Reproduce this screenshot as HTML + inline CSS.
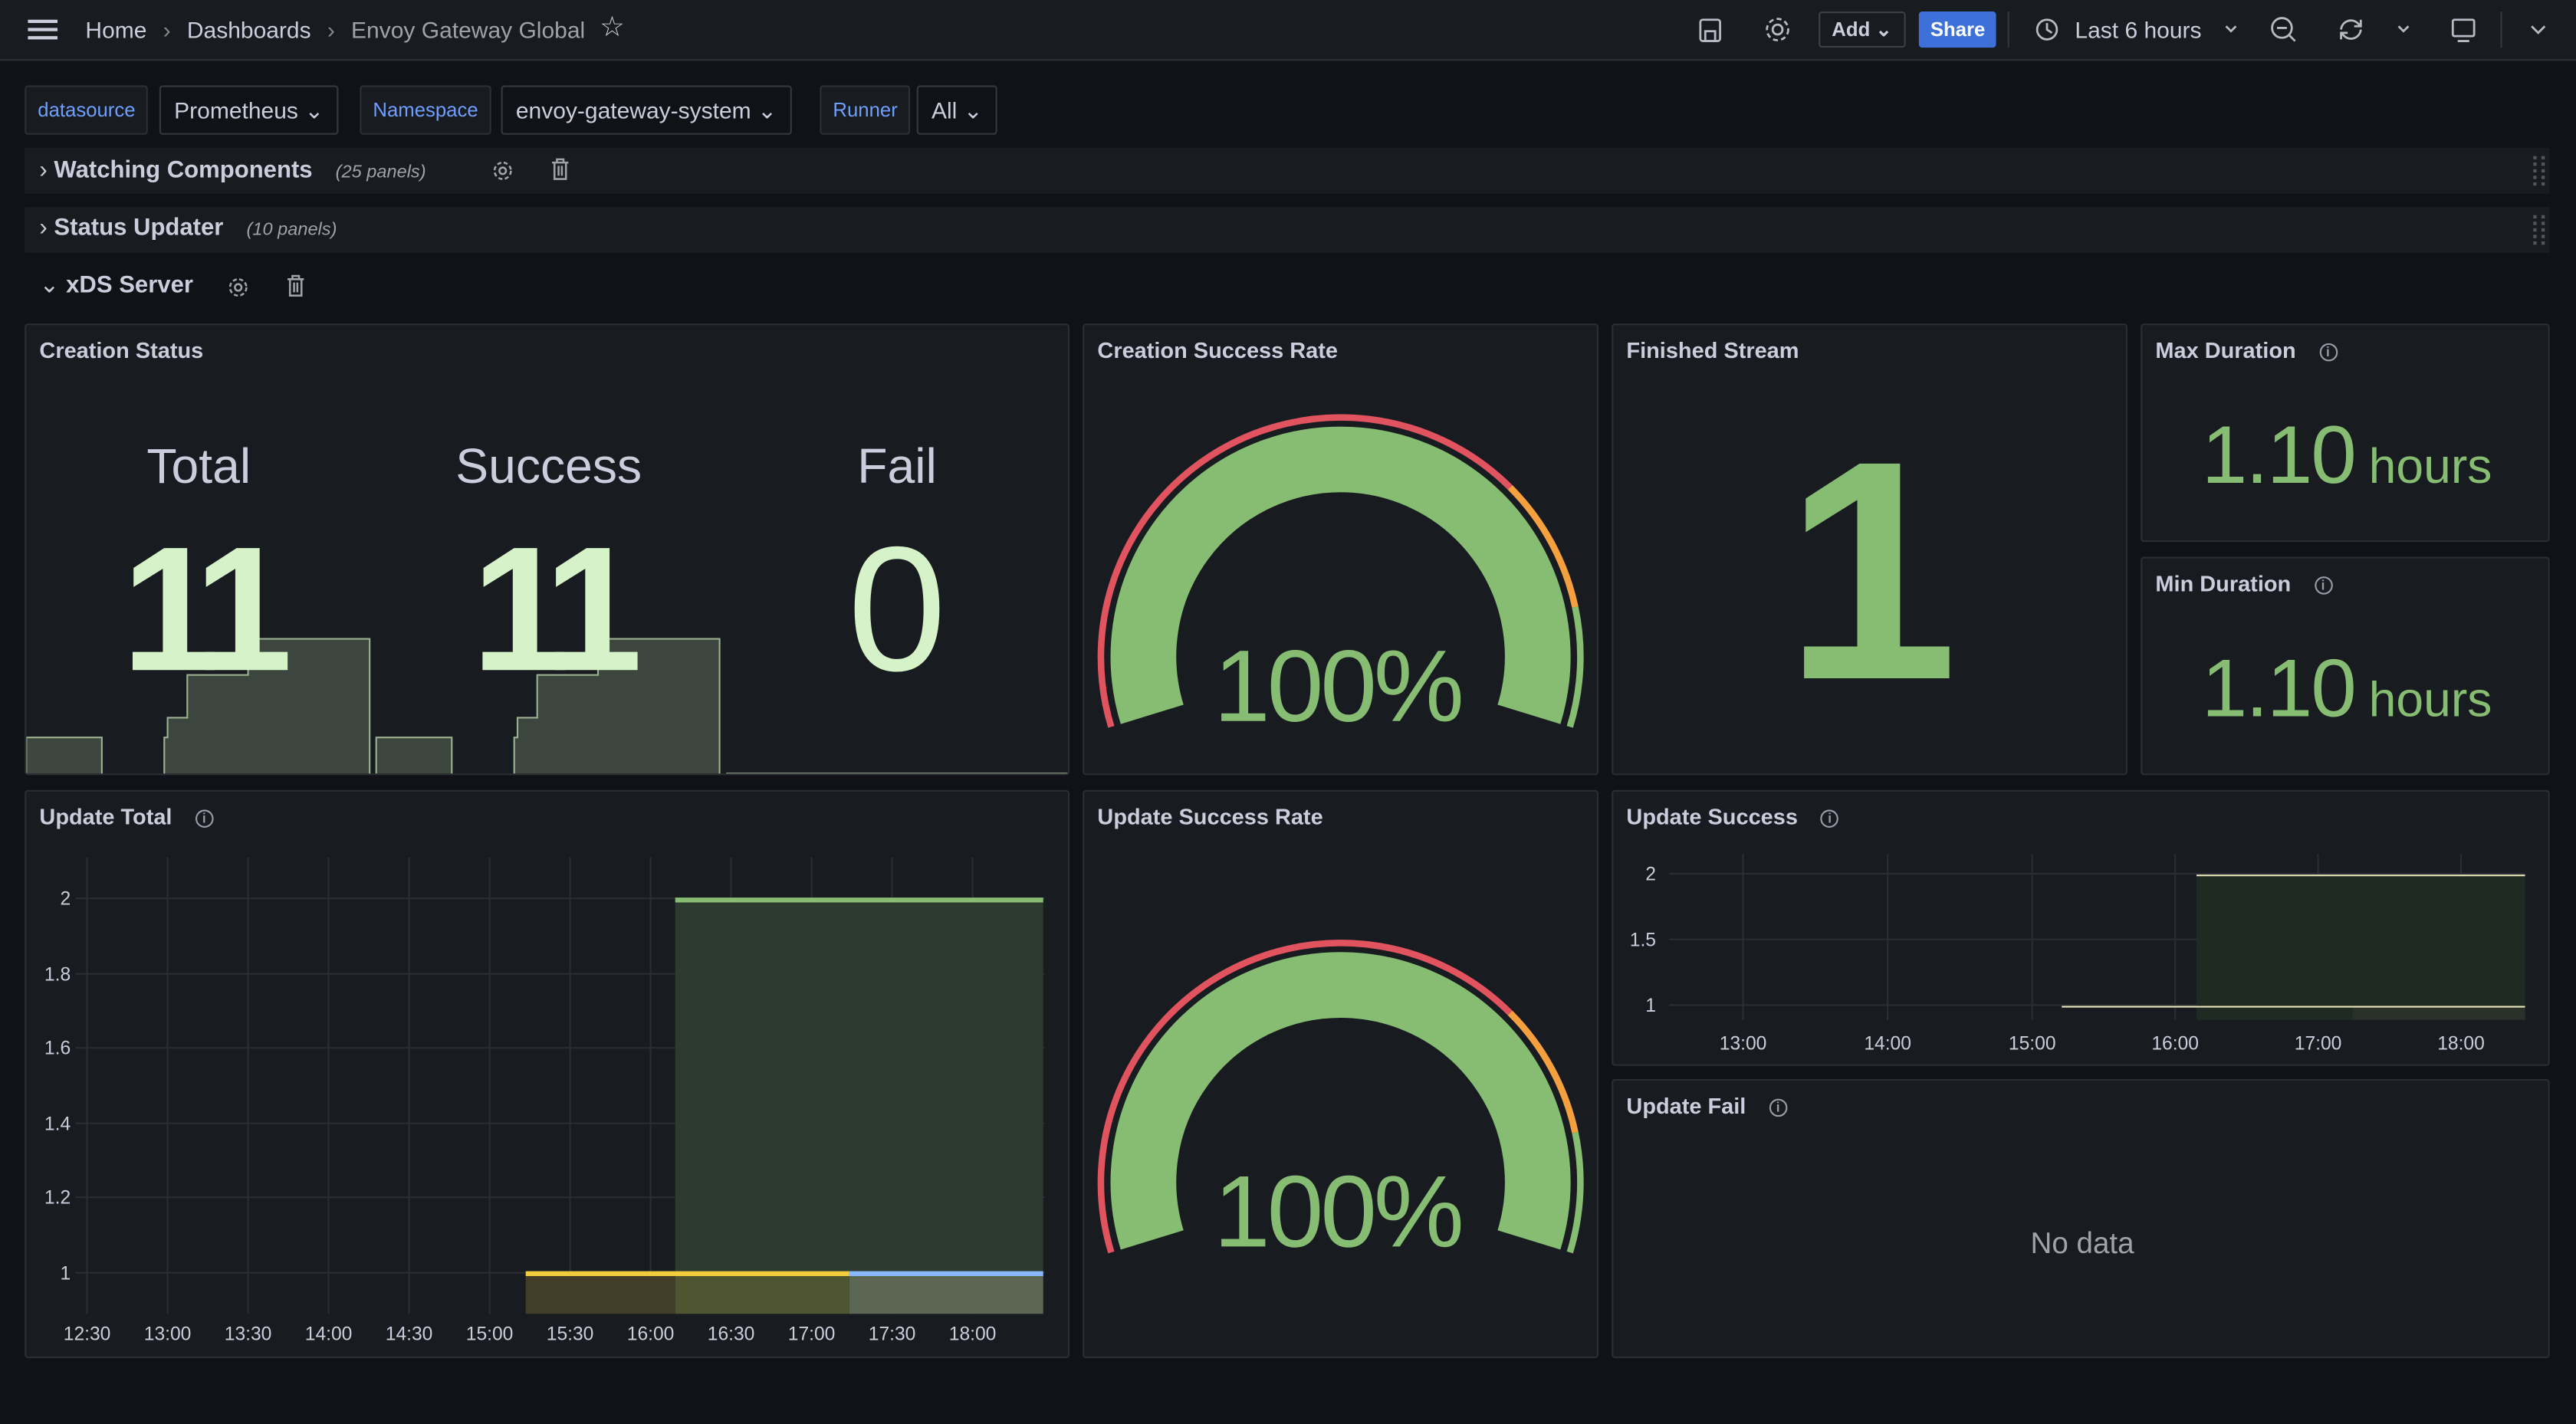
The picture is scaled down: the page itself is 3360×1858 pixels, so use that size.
<!DOCTYPE html>
<html><head><meta charset="utf-8"><style>
*{margin:0;padding:0;box-sizing:border-box}
html,body{width:3360px;height:1858px;overflow:hidden;background:#111217}
#s{position:absolute;left:0;top:0;width:1568px;height:867px;transform:scale(2.142857);transform-origin:0 0;font-family:"Liberation Sans",sans-serif;color:#ccccdc}
.a{position:absolute}
.top{left:0;top:0;width:1568px;height:37px;background:#181b1f;border-bottom:1px solid #2c2f35}
.p{position:absolute;background:#181b1f;border:1px solid #2a2d33;border-radius:2px}
.pt{position:absolute;left:8px;top:8px;font-size:13.5px;font-weight:bold;color:#ccccdc}
.lab{position:absolute;top:52px;height:30px;border:1px solid #2c2f35;background:#181b1f;border-radius:2px;font-size:12px;color:#6e9fff;padding:7px 7px}
.val{position:absolute;top:52px;height:30px;border:1px solid #34373d;background:#111217;border-radius:2px;font-size:14px;color:#ccccdc;padding:6px 8px}
.row{position:absolute;left:15px;width:1537px;height:28px;background:#181b1f}
.g{color:#86bd72}
.info{display:inline-block;width:11px;height:11px;border:1px solid #9a9aa8;border-radius:50%;font-size:8px;text-align:center;line-height:9px;color:#9a9aa8;font-weight:bold;vertical-align:middle;margin-left:14px}
</style></head><body><div id="s">
<div class="a top"></div>
<div class="a" style="left:17px;top:12px;width:18px;height:2px;background:#ccccdc;box-shadow:0 5px 0 #ccccdc,0 10px 0 #ccccdc"></div>
<div class="a" style="left:52px;top:10px;font-size:14px;color:#ccccdc">Home <span style="color:#888;margin:0 6px">›</span> Dashboards <span style="color:#888;margin:0 6px">›</span> <span style="color:#9fa1ab">Envoy Gateway Global</span></div>
<div class="a" style="left:365px;top:7px;font-size:17px;color:#ccccdc">☆</div>
<svg class="a" style="left:1030px;top:8px" width="540" height="22" fill="none" stroke="#b8b9c4" stroke-width="1.3">
<rect x="5" y="4" width="12" height="13" rx="1.5"/><rect x="8" y="11" width="6" height="6"/>
<circle cx="52" cy="10" r="3"/><circle cx="52" cy="10" r="6.5" stroke-dasharray="3 2"/>
<circle cx="216" cy="10" r="6"/><path d="M216 6v4l3 2"/>
<path d="M325 8l3 3 3-3"/>
<circle cx="359" cy="9" r="6"/><path d="M356 9h6M363.5 13.5l3.5 3.5"/>
<path d="M395 10a6 6 0 0 1 10-4l2 2M407 4v4h-4M407 10a6 6 0 0 1-10 4l-2-2M395 16v-4h4"/>
<path d="M430 8l3 3 3-3"/>
<rect x="463" y="4" width="13" height="10" rx="1"/><path d="M466 17h7"/>
<path d="M511 8l4 4 4-4"/>
</svg>
<div class="a" style="left:1107px;top:7px;width:53px;height:22px;border:1px solid #3d4047;border-radius:2px;font-size:12px;font-weight:bold;color:#ccccdc;padding:3px 7px">Add ⌄</div>
<div class="a" style="left:1168px;top:7px;width:47px;height:22px;background:#3d71d9;border-radius:2px;font-size:12px;font-weight:bold;color:#fff;padding:4px 7px">Share</div>
<div class="a" style="left:1222px;top:7px;width:1px;height:22px;background:#34373d"></div>
<div class="a" style="left:1263px;top:10px;font-size:14px;color:#ccccdc">Last 6 hours</div>
<div class="a" style="left:1522px;top:7px;width:1px;height:22px;background:#34373d"></div>

<div class="lab" style="left:15px">datasource</div><div class="val" style="left:97px">Prometheus ⌄</div>
<div class="lab" style="left:219px">Namespace</div><div class="val" style="left:305px">envoy-gateway-system ⌄</div>
<div class="lab" style="left:499px">Runner</div><div class="val" style="left:558px">All ⌄</div>

<div class="row" style="top:90px"></div><div class="row" style="top:126px"></div>
<div class="a" style="left:24px;top:96px;font-size:14.5px;color:#ccccdc">› <b>Watching Components</b> <i style="font-size:11px;color:#9fa1ab;margin-left:10px">(25 panels)</i></div>
<div class="a" style="left:24px;top:131px;font-size:14.5px;color:#ccccdc">› <b>Status Updater</b> <i style="font-size:11px;color:#9fa1ab;margin-left:10px">(10 panels)</i></div>
<div class="a" style="left:24px;top:166px;font-size:14.5px;color:#ccccdc">⌄ <b>xDS Server</b></div>
<svg class="a" style="left:0;top:0" width="1568" height="190" fill="none" stroke="#9fa1ab" stroke-width="1.2">
<circle cx="306" cy="104" r="2"/><circle cx="306" cy="104" r="5" stroke-dasharray="2.5 1.5"/>
<path d="M336 99h10M339 99v-2h4v2M337.5 99v10h7v-10M340 101v6M342 101v6"/>
<circle cx="145" cy="175" r="2"/><circle cx="145" cy="175" r="5" stroke-dasharray="2.5 1.5"/>
<path d="M175 170h10M178 170v-2h4v2M176.5 170v10h7v-10M179 172v6M181 172v6"/>
<g stroke="#555" stroke-width="2" stroke-dasharray="2 2"><path d="M1543 95v18M1548 95v18M1543 131v18M1548 131v18"/></g>
</svg>

<div class="p" style="left:15px;top:197px;width:636px;height:275px;overflow:hidden">
<div class="pt">Creation Status</div>
<svg class="a" style="left:0;top:0" width="636" height="275">
<g fill="#3c453e" stroke="#9ab08f" stroke-width="1">
<path d="M0 251h46v23H0zM84 251h2v-12h12v-26h37v-22h74v83H84z"/>
<path d="M213 251h46v23h-46zM297 251h2v-12h12v-26h37v-22h74v83H297z"/>
</g>
<path d="M426 273h210" stroke="#9ab08f"/>
<g font-family="Liberation Sans" text-anchor="middle">
<text x="105" y="96" font-size="30" fill="#ccccdc">Total</text>
<text x="318" y="96" font-size="30" fill="#ccccdc">Success</text>
<text x="530" y="96" font-size="30" fill="#ccccdc">Fail</text>
<g fill="#d6f2c8" font-size="108" font-weight="bold"><text x="105" y="210" letter-spacing="-10">11</text><text x="318" y="210" letter-spacing="-10">11</text><text x="530" y="210" font-weight="normal">0</text></g>
</g></svg></div>

<div class="p" style="left:659px;top:197px;width:314px;height:275px"><div class="pt">Creation Success Rate</div></div>
<div class="p" style="left:659px;top:481px;width:314px;height:346px"><div class="pt">Update Success Rate</div></div>
<svg class="a" style="left:0;top:0" width="1568" height="867">
<defs><g id="gg">
<path d="M701.3 435A120 120 0 1 1 930.7 435" stroke="#86bd72" stroke-width="40" fill="none"/>
<path d="M676.4 442.6A146 146 0 0 1 919.2 296.8" stroke="#e0535f" stroke-width="4" fill="none"/>
<path d="M919.2 296.8A146 146 0 0 1 958.8 369.6" stroke="#f5a03f" stroke-width="4" fill="none"/>
<path d="M958.8 369.6A146 146 0 0 1 955.6 442.6" stroke="#86bd72" stroke-width="4" fill="none"/>
<text x="814" y="439" font-family="Liberation Sans" font-size="62" letter-spacing="-2" fill="#86bd72" text-anchor="middle">100%</text>
</g></defs>
<use href="#gg"/><use href="#gg" y="320"/>
</svg>

<div class="p" style="left:981px;top:197px;width:314px;height:275px"><div class="pt">Finished Stream</div>
<div class="a g" style="left:0;width:314px;top:40px;text-align:center;font-size:190px;line-height:220px;font-weight:bold">1</div></div>
<div class="p" style="left:1303px;top:197px;width:249px;height:133px"><div class="pt">Max Duration<span class="info">i</span></div>
<div class="a g" style="left:0;width:249px;top:50px;text-align:center;font-size:50px;letter-spacing:-1px"><span>1.10</span><span style="font-size:30px;letter-spacing:0"> hours</span></div></div>
<div class="p" style="left:1303px;top:339px;width:249px;height:133px"><div class="pt">Min Duration<span class="info">i</span></div>
<div class="a g" style="left:0;width:249px;top:50px;text-align:center;font-size:50px;letter-spacing:-1px"><span>1.10</span><span style="font-size:30px;letter-spacing:0"> hours</span></div></div>

<div class="p" style="left:15px;top:481px;width:636px;height:346px"><div class="pt">Update Total<span class="info">i</span></div></div>
<svg class="a" style="left:0;top:0" width="1568" height="867" font-family="Liberation Sans" font-size="11.5" fill="#ccccdc">
<g stroke="#2a2d33" stroke-width="1">
<path d="M53 522v278M102 522v278M151 522v278M200 522v278M249 522v278M298 522v278M347 522v278M396 522v278M445 522v278M494 522v278M543 522v278M592 522v278"/>
<path d="M46 547h590M46 593h590M46 638h590M46 684h590M46 729h590M46 775h590"/>
</g>
<rect x="411" y="548" width="224" height="228" fill="#2d3a30"/>
<rect x="320" y="776" width="91" height="24" fill="#423d29"/>
<rect x="411" y="776" width="106" height="24" fill="#4f5530"/>
<rect x="517" y="776" width="118" height="24" fill="#5b6753"/>
<path d="M411 548h224" stroke="#86bd72" stroke-width="3"/>
<path d="M320 775.5h197" stroke="#f2cc3d" stroke-width="3"/>
<path d="M517 775.5h118" stroke="#8ab8ff" stroke-width="3"/>
<g text-anchor="end"><text x="43" y="551">2</text><text x="43" y="597">1.8</text><text x="43" y="642">1.6</text><text x="43" y="688">1.4</text><text x="43" y="733">1.2</text><text x="43" y="779">1</text></g>
<g text-anchor="middle"><text x="53" y="816">12:30</text><text x="102" y="816">13:00</text><text x="151" y="816">13:30</text><text x="200" y="816">14:00</text><text x="249" y="816">14:30</text><text x="298" y="816">15:00</text><text x="347" y="816">15:30</text><text x="396" y="816">16:00</text><text x="445" y="816">16:30</text><text x="494" y="816">17:00</text><text x="543" y="816">17:30</text><text x="592" y="816">18:00</text></g>
</svg>

<div class="p" style="left:981px;top:481px;width:571px;height:168px"><div class="pt">Update Success<span class="info">i</span></div></div>
<svg class="a" style="left:0;top:0" width="1568" height="867" font-family="Liberation Sans" font-size="11.5" fill="#ccccdc">
<g stroke="#2a2d33"><path d="M1061 520v101M1149 520v101M1237 520v101M1324 520v101M1411 520v101M1498 520v101M1016 532h521M1016 572h521M1016 612h521"/></g>
<rect x="1337" y="533" width="200" height="88" fill="#1f2a22"/>
<rect x="1432" y="613" width="105" height="8" fill="#2a3129"/>
<path d="M1337 533h200" stroke="#e8e3b8" stroke-width="1"/>
<path d="M1255 613h282" stroke="#e8e3b8" stroke-width="1"/>
<g text-anchor="end"><text x="1008" y="536">2</text><text x="1008" y="576">1.5</text><text x="1008" y="616">1</text></g>
<g text-anchor="middle"><text x="1061" y="639">13:00</text><text x="1149" y="639">14:00</text><text x="1237" y="639">15:00</text><text x="1324" y="639">16:00</text><text x="1411" y="639">17:00</text><text x="1498" y="639">18:00</text></g>
</svg>
<div class="p" style="left:981px;top:657px;width:571px;height:170px"><div class="pt">Update Fail<span class="info">i</span></div>
<div class="a" style="left:0;width:571px;top:89px;text-align:center;font-size:18px;color:#9fa1ab">No data</div></div>
</div></body></html>
